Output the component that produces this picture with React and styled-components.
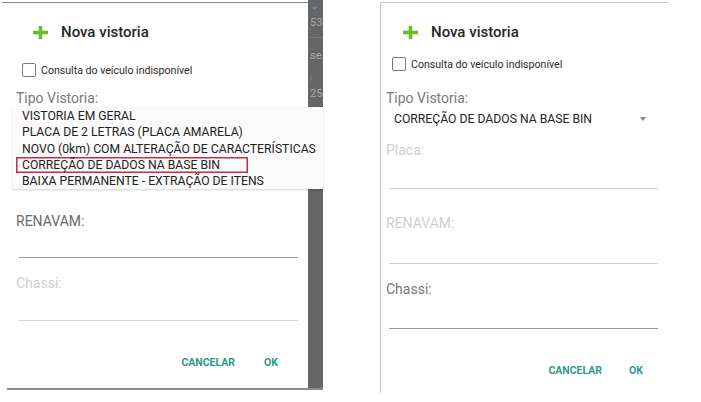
import React from 'react';
import styled, { createGlobalStyle } from 'styled-components';

const Global = createGlobalStyle`
  html, body { margin: 0; padding: 0; background: #fff; }
  body { font-family: Roboto, "Noto Sans", Arial, sans-serif; }
  * { box-sizing: border-box; }
`;

const Page = styled.div`
  display: flex;
  align-items: flex-start;
  width: 701px;
  height: 402px;
  overflow: hidden;
`;

const LeftShot = styled.div`
  position: relative;
  width: 323px;
  display: flex;
  flex-direction: column;
`;

const ShotRow = styled.div`
  display: flex;
  align-items: flex-start;
`;

const Dialog = styled.div`
  margin-top: 2px;
  margin-left: ${(p) => p.$ml}px;
  width: ${(p) => p.$w}px;
  height: ${(p) => p.$h}px;
  background: #fff;
  border-top: 1px solid ${(p) => p.$line};
  border-left: ${(p) => (p.$bordered ? `1px solid ${p.$line}` : 'none')};
  padding-left: ${(p) => p.$pad}px;
  display: flex;
  flex-direction: column;
`;

const Strip = styled.div`
  width: 15px;
  height: 388px;
  background: #666;
  overflow: hidden;
  display: flex;
  flex-direction: column;
  padding-left: 2px;
  font-size: 11px;
  color: #a8a8a8;
`;

const StripText = styled.div`
  height: ${(p) => p.$h}px;
  line-height: ${(p) => p.$h}px;
  white-space: nowrap;
  color: ${(p) => p.$color || '#a8a8a8'};
  border-bottom: ${(p) => (p.$rule ? '1px solid #777' : 'none')};
  font-weight: ${(p) => (p.$bold ? 700 : 400)};
`;

const BottomLine = styled.div`
  margin-left: 7px;
  width: 316px;
  height: 2px;
  background: #8a8a8a;
`;

const TitleRow = styled.div`
  margin-top: 17px;
  height: 24px;
  display: flex;
  align-items: center;
  padding-left: 22px;
`;

const TitleText = styled.span`
  margin-left: 13px;
  font-size: 15px;
  font-weight: 500;
  color: #262626;
`;

const CheckRow = styled.div`
  margin-top: ${(p) => p.$mt}px;
  height: 16px;
  display: flex;
  align-items: center;
  padding-left: 11px;
`;

const CheckBox = styled.span`
  width: 14px;
  height: 14px;
  border: 1.5px solid #7a7a7a;
  border-radius: 2px;
  flex: none;
`;

const CheckLabel = styled.span`
  margin-left: 5px;
  font-size: 10.6px;
  color: #2a2a2a;
  white-space: nowrap;
`;

const FieldLabel = styled.div`
  margin-top: ${(p) => p.$mt}px;
  height: 16px;
  line-height: 16px;
  padding-left: 5px;
  font-size: 14px;
  color: ${(p) => p.$color};
  white-space: nowrap;
  visibility: ${(p) => (p.$covered ? 'hidden' : 'visible')};
`;

const FieldLine = styled.div`
  margin-top: ${(p) => p.$mt}px;
  margin-left: 8px;
  margin-right: 10px;
  height: 1px;
  background: ${(p) => p.$color};
`;

const SelectRow = styled.div`
  margin-top: 3px;
  height: 20px;
  display: flex;
  align-items: center;
  padding-left: 13px;
  padding-right: 22px;
  justify-content: space-between;
  visibility: ${(p) => (p.$covered ? 'hidden' : 'visible')};
`;

const SelectValue = styled.span`
  font-size: 12.2px;
  color: #222;
  white-space: nowrap;
`;

const Caret = styled.span`
  width: 0;
  height: 0;
  border-left: 3.5px solid transparent;
  border-right: 3.5px solid transparent;
  border-top: 4px solid #8a8a8a;
`;

const ButtonRow = styled.div`
  margin-top: ${(p) => p.$mt}px;
  height: 20px;
  display: flex;
  justify-content: flex-end;
  align-items: center;
  gap: ${(p) => p.$gap}px;
  padding-right: ${(p) => p.$pr}px;
`;

const TextButton = styled.button`
  border: none;
  background: none;
  padding: 0;
  font-family: Roboto, Arial, sans-serif;
  font-size: 10.5px;
  font-weight: 700;
  color: #2b9a8a;
  letter-spacing: 0;
`;

const Menu = styled.div`
  position: absolute;
  top: 107px;
  left: 13px;
  width: 310px;
  height: 82px;
  background: #fbfbfb;
  box-shadow: 0 1px 2px rgba(0, 0, 0, 0.18);
  padding-top: 1px;
  padding-left: 9px;
`;

const MenuItem = styled.div`
  height: 16.3px;
  line-height: 16.3px;
  font-size: 12.2px;
  color: #222;
  white-space: nowrap;
  ${(p) =>
    p.$marked &&
    `
    width: 232px;
    margin-left: -6px;
    padding-left: 6px;
    box-shadow: inset 0 0 0 1.5px #cc2c38;
  `}
`;

const RightShot = styled.div`
  margin-left: 57px;
`;

const Plus = () => (
  <svg width="15" height="13" viewBox="0 0 15 13">
    <rect x="5.7" y="0" width="3.6" height="13" fill="#6cbd2c" />
    <rect x="0" y="4.7" width="15" height="3.6" fill="#6cbd2c" />
  </svg>
);

const items = [
  'VISTORIA EM GERAL',
  'PLACA DE 2 LETRAS (PLACA AMARELA)',
  'NOVO (0km) COM ALTERAÇÃO DE CARACTERÍSTICAS',
  'CORREÇÃO DE DADOS NA BASE BIN',
  'BAIXA PERMANENTE - EXTRAÇÃO DE ITENS',
];

export default function App() {
  return (
    <>
      <Global />
      <Page>
        <LeftShot>
          <ShotRow>
            <Dialog $ml={2} $w={306} $h={386} $line="#8a8a8a" $pad={9}>
              <TitleRow>
                <Plus />
                <TitleText>Nova vistoria</TitleText>
              </TitleRow>
              <CheckRow $mt={18}>
                <CheckBox />
                <CheckLabel>Consulta do veículo indisponível</CheckLabel>
              </CheckRow>
              <FieldLabel $mt={12} $color="#7a7a7a">Tipo Vistoria:</FieldLabel>
              <SelectRow $covered>
                <Caret />
              </SelectRow>
              <FieldLabel $mt={13} $color="#cfcfcf" $covered>Placa:</FieldLabel>
              <FieldLine $mt={29} $color="#d0d0d0" />
              <FieldLabel $mt={25} $color="#6a6a6a">RENAVAM:</FieldLabel>
              <FieldLine $mt={28} $color="#9a9a9a" />
              <FieldLabel $mt={17} $color="#cfcfcf">Chassi:</FieldLabel>
              <FieldLine $mt={29} $color="#d6d6d6" />
              <ButtonRow $mt={31} $gap={29} $pr={30}>
                <TextButton>CANCELAR</TextButton>
                <TextButton>OK</TextButton>
              </ButtonRow>
            </Dialog>
            <Strip>
              <StripText $h={12} $color="#5f8fb0" $bold>⌄</StripText>
              <StripText $h={22}>53</StripText>
              <StripText $h={4} $rule />
              <StripText $h={36}>se</StripText>
              <StripText $h={10} $color="#4a88b8" $bold>›</StripText>
              <StripText $h={20}>25</StripText>
            </Strip>
          </ShotRow>
          <BottomLine />
          <Menu>
            {items.map((t, i) => (
              <MenuItem key={t} $marked={i === 3}>
                {t}
              </MenuItem>
            ))}
          </Menu>
        </LeftShot>
        <RightShot>
          <Dialog $ml={0} $w={288} $h={391} $line="#c8c8c8" $bordered $pad={0}>
            <TitleRow>
              <Plus />
              <TitleText>Nova vistoria</TitleText>
            </TitleRow>
            <CheckRow $mt={12}>
              <CheckBox />
              <CheckLabel>Consulta do veículo indisponível</CheckLabel>
            </CheckRow>
            <FieldLabel $mt={18} $color="#7a7a7a">Tipo Vistoria:</FieldLabel>
            <SelectRow>
              <SelectValue>CORREÇÃO DE DADOS NA BASE BIN</SelectValue>
              <Caret />
            </SelectRow>
            <FieldLabel $mt={13} $color="#cfcfcf">Placa:</FieldLabel>
            <FieldLine $mt={30} $color="#d0d0d0" />
            <FieldLabel $mt={26} $color="#cfcfcf">RENAVAM:</FieldLabel>
            <FieldLine $mt={32} $color="#d0d0d0" />
            <FieldLabel $mt={17} $color="#777">Chassi:</FieldLabel>
            <FieldLine $mt={31} $color="#9a9a9a" />
            <ButtonRow $mt={31} $gap={27} $pr={25}>
              <TextButton>CANCELAR</TextButton>
              <TextButton>OK</TextButton>
            </ButtonRow>
          </Dialog>
        </RightShot>
      </Page>
    </>
  );
}
